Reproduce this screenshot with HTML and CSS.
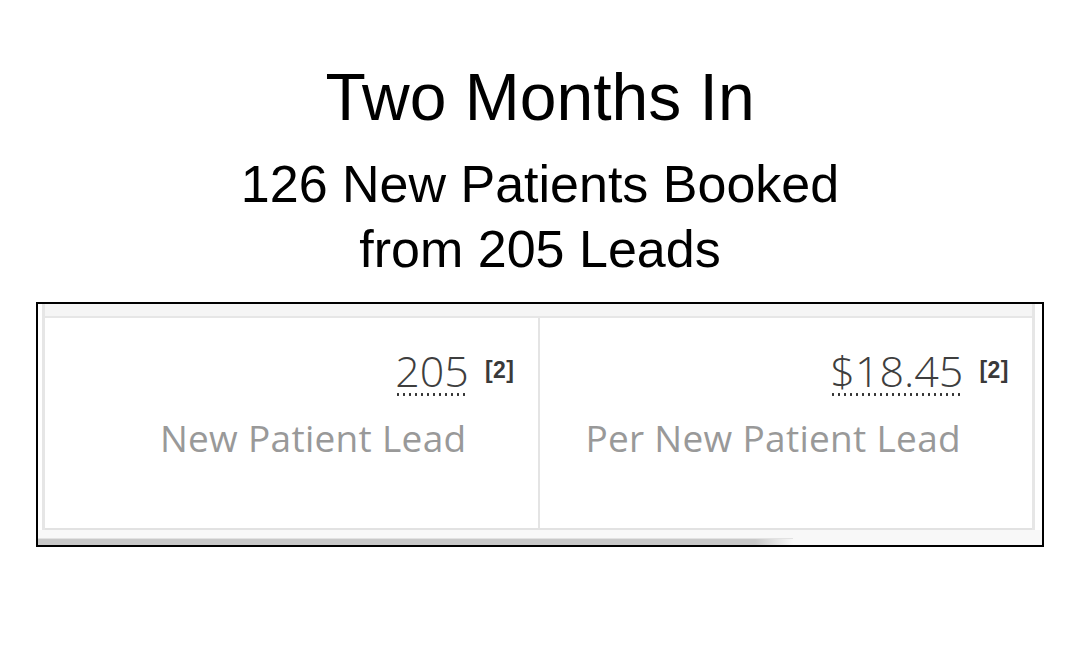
FILE: index.html
```html
<!DOCTYPE html>
<html lang="en">
<head>
<meta charset="utf-8">
<title>Two Months In</title>
<link rel="stylesheet" href="styles.css">
</head>
<body>
  <header class="intro">
    <h1 class="title">Two Months In</h1>
    <p class="subtitle">126 New Patients Booked<br>from 205 Leads</p>
  </header>
  <section class="frame">
    <div class="grid">
      <div class="grid-head"></div>
      <div class="grid-row">
        <div class="cell cell-first">
          <div class="value"><span class="num">205</span><span class="ref">[2]</span></div>
          <div class="label">New Patient Lead</div>
        </div>
        <div class="cell">
          <div class="value"><span class="num">$18.45</span><span class="ref">[2]</span></div>
          <div class="label">Per New Patient Lead</div>
        </div>
      </div>
    </div>
    <div class="scroll-area">
      <div class="scroll-thumb"></div>
    </div>
  </section>
</body>
</html>
```
FILE: styles.css
```css
html, body {
  margin: 0;
  padding: 0;
  background: #ffffff;
}

body {
  width: 1080px;
  height: 654px;
  overflow: hidden;
  font-family: "Liberation Sans", Arial, sans-serif;
  color: #000;
}

.intro {
  text-align: center;
  padding-top: 64px;
}

.title {
  margin: 0;
  font-size: 66px;
  line-height: 66px;
  font-weight: 400;
}

.subtitle {
  margin: 22px 0 0;
  font-size: 52px;
  line-height: 65px;
  font-weight: 400;
}

.frame {
  margin: 20px 0 0 36px;
  width: 1004px;
  height: 241px;
  border: 2px solid #000;
  display: flex;
  flex-direction: column;
  background: #fff;
}

.grid {
  flex: 1;
  margin: 0 7px 0 4px;
  border-left: 3px solid #e6e6e6;
  border-right: 3px solid #e6e6e6;
  display: flex;
  flex-direction: column;
}

.grid-head {
  height: 12px;
  background: #f5f5f5;
  border-bottom: 2px solid #e6e6e6;
}

.grid-row {
  flex: 1;
  display: flex;
  border-bottom: 2px solid #e2e2e2;
}

.cell {
  flex: 1;
  text-align: right;
  padding: 27px 71px 0 0;
  font-family: "Open Sans", "Noto Sans", sans-serif;
}

.cell-first {
  border-right: 2px solid #e4e4e4;
}

.value {
  font-size: 43px;
  line-height: 52px;
  font-weight: 300;
  color: #3e3e3e;
  white-space: nowrap;
}

.num {
  display: inline-block;
  line-height: 43px;
  padding-bottom: 4px;
  background-image: radial-gradient(circle, #333 1.1px, transparent 1.4px);
  background-size: 6px 3px;
  background-repeat: repeat-x;
  background-position: left bottom;
}

.ref {
  display: inline-block;
  margin-left: 16px;
  margin-right: -48px;
  font-family: "Liberation Sans", Arial, sans-serif;
  font-size: 23px;
  line-height: 22px;
  font-weight: 700;
  letter-spacing: 0.5px;
  color: #3a3a3a;
  vertical-align: 9px;
}

.label {
  margin-top: 19px;
  font-size: 37px;
  line-height: 44px;
  font-weight: 400;
  letter-spacing: 0.3px;
  color: #999;
  white-space: nowrap;
}

.scroll-area {
  height: 15px;
  background: #f8f8f8;
  display: flex;
  align-items: flex-end;
}

.scroll-thumb {
  width: 755px;
  height: 6px;
  background: linear-gradient(to right, #c8c8c8 0%, #c8c8c8 95%, rgba(200,200,200,0) 100%);
  box-shadow: 0 -1px 0 #e2e2e2;
}
```
